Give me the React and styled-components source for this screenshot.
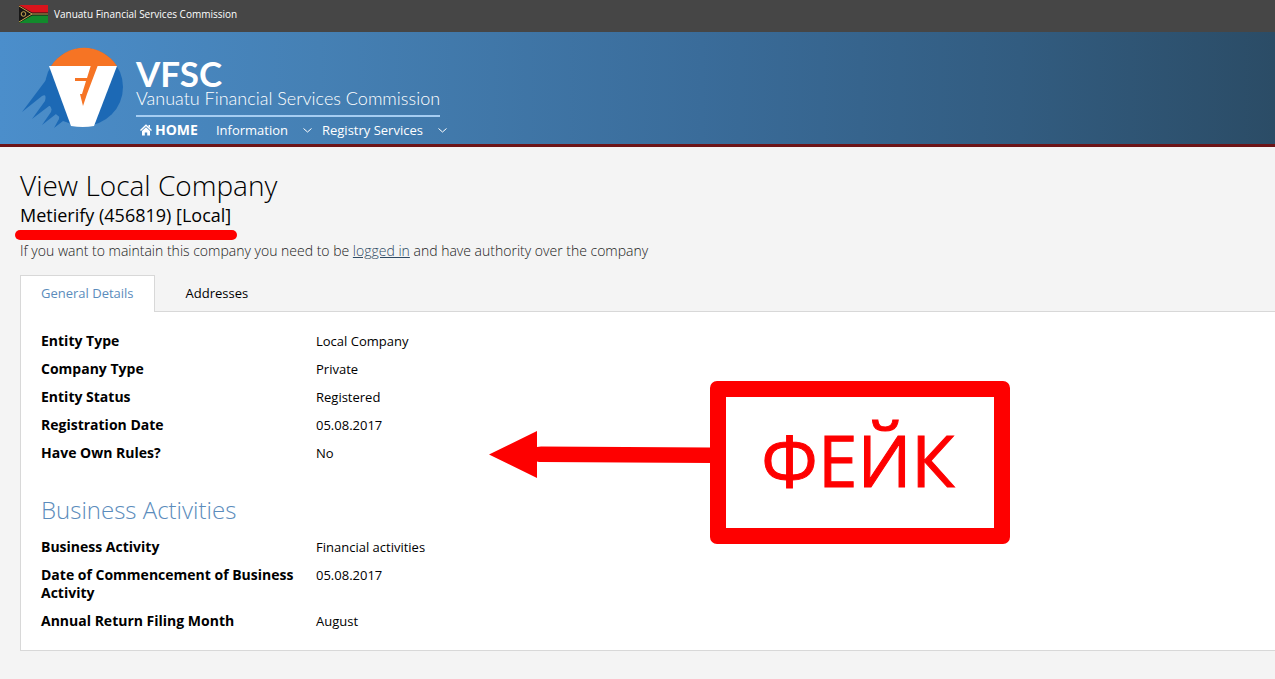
import React, { useState } from "react";
import styled, { createGlobalStyle } from "styled-components";

const GlobalStyle = createGlobalStyle`
  *, *::before, *::after { box-sizing: border-box; }
  body {
    margin: 0;
    background: #f4f4f4;
    color: #000;
    font-family: "Open Sans", "Noto Sans", sans-serif;
    font-size: 13px;
    line-height: 18px;
  }
  h1, h2, p, dl, dd { margin: 0; }
`;

const Page = styled.div`
  position: relative;
  overflow-x: hidden;
`;

const TopBar = styled.div`
  display: flex;
  align-items: center;
  gap: 6px;
  height: 32px;
  padding: 0 19px 4px;
  background: #464646;
  color: #fff;
  font-size: 10px;
`;

const Header = styled.header`
  display: flex;
  gap: 11px;
  height: 115px;
  padding: 15px 20px 0;
  border-bottom: 3px solid #6d1417;
  background: linear-gradient(90deg, #4b8ecb 0%, #4580b4 25%, #3a6c9a 55%, #325c80 80%, #2b4c66 100%);
  color: #fff;
`;

const Brand = styled.div`
  display: flex;
  flex-direction: column;
  align-items: flex-start;
  padding-top: 11px;
`;

const BrandName = styled.div`
  font-family: Lato, sans-serif;
  font-weight: 700;
  font-size: 35px;
  line-height: 30px;
`;

const BrandTitle = styled.div`
  padding-bottom: 7px;
  border-bottom: 2px solid #a5cdf2;
  font-family: Lato, sans-serif;
  font-weight: 300;
  font-size: 18px;
  line-height: 20px;
`;

const Nav = styled.nav`
  display: flex;
  align-items: center;
  gap: 10px;
  padding: 4px 4px 0;
`;

const HomeLink = styled.a`
  display: flex;
  align-items: center;
  gap: 3px;
  margin-right: 8px;
  color: #fff;
  font-size: 14px;
  font-weight: 700;
  text-decoration: none;
`;

const NavButton = styled.button`
  display: flex;
  align-items: center;
  gap: 15px;
  padding: 0;
  border: 0;
  background: none;
  color: #fff;
  font: inherit;
  line-height: 18px;
`;

const Main = styled.main`
  padding: 22px 0 28px 20px;
`;

const Title = styled.h1`
  font-size: 28px;
  font-weight: 300;
  line-height: 32px;
`;

const Company = styled.p`
  position: relative;
  width: fit-content;
  font-size: 18px;
  line-height: 28px;

  &::after {
    content: "";
    position: absolute;
    top: 29px;
    left: -5px;
    right: -6px;
    height: 10px;
    border-radius: 5px;
    background: #fe0000;
  }
`;

const Notice = styled.p`
  padding: 12px 0 14px;
  color: #222;
  font-size: 14px;
  font-weight: 300;
  line-height: 20px;

  a { color: #2f4a63; }
`;

const Tabs = styled.div`
  display: flex;
`;

const Tab = styled.button`
  height: 37px;
  margin-bottom: -1px;
  padding: 0 20px 2px;
  border: 1px solid ${(p) => (p.$active ? "#d8d8d8" : "transparent")};
  border-bottom: 0;
  background: ${(p) => (p.$active ? "#fff" : "transparent")};
  color: ${(p) => (p.$active ? "#5b8cbc" : "#000")};
  font: inherit;
  position: relative;
  z-index: ${(p) => (p.$active ? 1 : 0)};

  & + & { margin-left: 10px; }
`;

const Panel = styled.section`
  position: relative;
  padding: 20px;
  border: 1px solid #d8d8d8;
  border-right: 0;
  background: #fff;
`;

const SectionTitle = styled.h2`
  padding: 32px 0 12px;
  color: #5b8cbc;
  font-size: 24px;
  font-weight: 300;
  line-height: 32px;
`;

const Details = styled.dl`
  display: grid;
  grid-template-columns: 255px 1fr;
  gap: 10px 20px;
`;

const Label = styled.dt`
  font-size: 14px;
  font-weight: 700;
`;

const Callout = styled.div`
  position: absolute;
  top: 69px;
  left: 468px;
  display: flex;
  align-items: flex-start;
`;

const CalloutBox = styled.div`
  width: 300px;
  padding: 21px 4px 27px 0;
  border: 16px solid #fe0000;
  border-radius: 7px;
  background: #fff;
  color: #fe0000;
  font-size: 71px;
  -webkit-text-stroke: 1px #fe0000;
  line-height: 83px;
  text-align: center;
`;

const Flag = () => (
  <svg width="29" height="18" viewBox="0 0 29 18" aria-hidden="true">
    <rect width="29" height="9" fill="#d8141c" />
    <rect y="9" width="29" height="9" fill="#128a2c" />
    <path d="M0 0L13 7.500H29V10.500H13L0 18Z" fill="#161616" />
    <path d="M0 1L13 9H29M13 9L0 17" fill="none" stroke="#c9a850" />
    <circle cx="4.500" cy="9" r="2.300" fill="none" stroke="#c9a850" />
  </svg>
);

const Logo = () => (
  <svg width="105" height="84" viewBox="0 0 105 84" aria-hidden="true">
    <circle cx="64" cy="40" r="39" fill="#1c69b5" />
    <path d="M31 19A39 39 0 0 1 97 19Z" fill="#f67424" />
    <path
      d="M26 33L2 65L22 49Q27 46 25 54L12 72L29 59Q33 58 31 65L22 78L36 67Q40 67 39 72L34 81L43 74L52 77L50 40Z"
      fill="#1c69b5"
    />
    <path d="M29 19H97L74 79Q63 81 51 79Z" fill="#fff" />
    <path
      d="M71 18H78L67 47L63 59L60 47H62L66 34H55V31H67Z"
      fill="#f67424"
    />
  </svg>
);

const HomeIcon = () => (
  <svg width="12" height="12" viewBox="0 0 12 12" aria-hidden="true">
    <path d="M0.500 6.500L6 1.200L11.500 6.500" fill="none" stroke="#fff" strokeWidth="1.400" />
    <path d="M2 7L6 3.300L10 7V11.500H7.200V8.500H4.800V11.500H2Z" fill="#fff" />
    <path d="M8.500 1H10V4L8.500 2.600Z" fill="#fff" />
  </svg>
);

const Chevron = () => (
  <svg width="9" height="5" viewBox="0 0 9 5" aria-hidden="true">
    <path d="M0.500 0.500L4.500 4L8.500 0.500" fill="none" stroke="#fff" />
  </svg>
);

const ArrowShape = styled.svg`
  flex: none;
  margin-top: 50px;
`;

const Arrow = () => (
  <ArrowShape width="221" height="48" viewBox="0 0 221 48" aria-hidden="true">
    <path d="M0 23.500L48 0V16Q50 15.500 52 15.500L221 16.500V32L52 31Q50 31 48 30.500V47Z" fill="#fe0000" />
  </ArrowShape>
);

const general = [
  ["Entity Type", "Local Company"],
  ["Company Type", "Private"],
  ["Entity Status", "Registered"],
  ["Registration Date", "05.08.2017"],
  ["Have Own Rules?", "No"],
];

const business = [
  ["Business Activity", "Financial activities"],
  ["Date of Commencement of Business Activity", "05.08.2017"],
  ["Annual Return Filing Month", "August"],
];

const DetailList = ({ items }) => (
  <Details>
    {items.map(([label, value]) => (
      <React.Fragment key={label}>
        <Label>{label}</Label>
        <dd>{value}</dd>
      </React.Fragment>
    ))}
  </Details>
);

export default function App() {
  const [tab, setTab] = useState("General Details");
  return (
    <Page>
      <GlobalStyle />
      <TopBar>
        <Flag />
        Vanuatu Financial Services Commission
      </TopBar>
      <Header>
        <Logo />
        <Brand>
          <BrandName>VFSC</BrandName>
          <BrandTitle>Vanuatu Financial Services Commission</BrandTitle>
          <Nav>
            <HomeLink href="#home"><HomeIcon />HOME</HomeLink>
            <NavButton type="button">Information<Chevron /></NavButton>
            <NavButton type="button">Registry Services<Chevron /></NavButton>
          </Nav>
        </Brand>
      </Header>
      <Main>
        <Title>View Local Company</Title>
        <Company>Metierify (456819) [Local]</Company>
        <Notice>
          If you want to maintain this company you need to be <a href="#login">logged in</a> and have
          authority over the company
        </Notice>
        <Tabs role="tablist">
          {["General Details", "Addresses"].map((name) => (
            <Tab
              key={name}
              type="button"
              role="tab"
              aria-selected={tab === name}
              $active={tab === name}
              onClick={() => setTab(name)}
            >
              {name}
            </Tab>
          ))}
        </Tabs>
        <Panel role="tabpanel">
          <DetailList items={general} />
          <SectionTitle>Business Activities</SectionTitle>
          <DetailList items={business} />
          <Callout>
            <Arrow />
            <CalloutBox>ФЕЙК</CalloutBox>
          </Callout>
        </Panel>
      </Main>
    </Page>
  );
}
